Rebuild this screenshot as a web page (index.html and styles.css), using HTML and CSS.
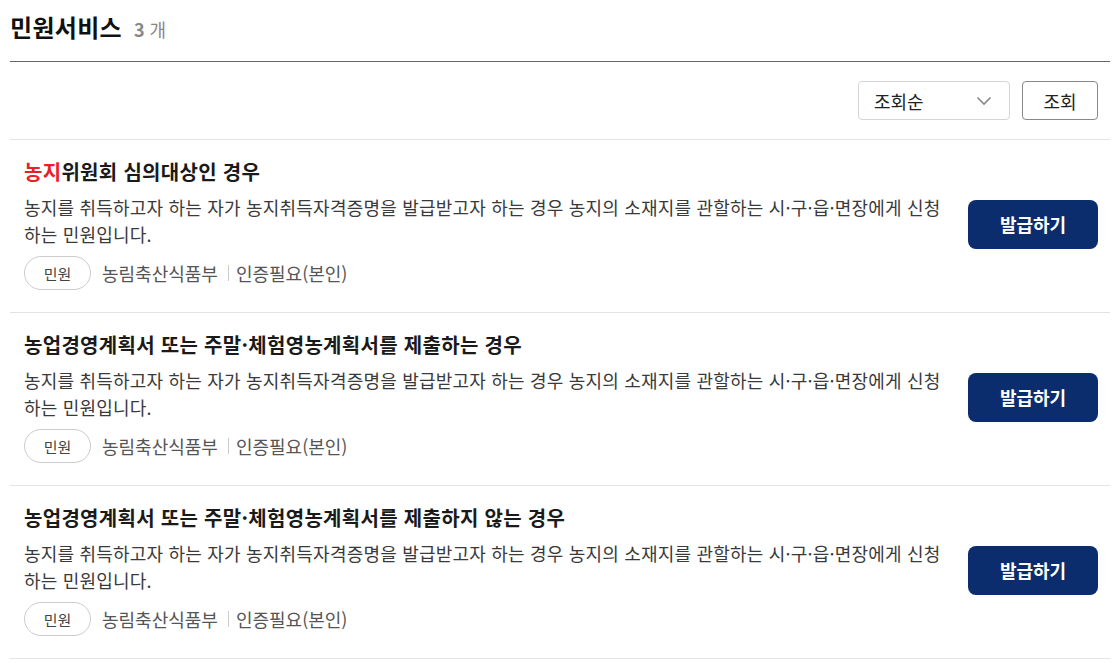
FILE: index.html
```html
<!DOCTYPE html>
<html lang="ko">
<head>
<meta charset="utf-8">
<link rel="stylesheet" href="styles.css">
</head>
<body>
<div class="page">
  <div class="head">
    <h2 class="title">민원서비스</h2>
    <span class="count"><b>3</b> 개</span>
  </div>
  <div class="sortbar">
    <div class="select">
      <span>조회순</span>
      <svg width="16" height="10" viewBox="0 0 16 10"><path d="M1.5 1.5 L8 8 L14.5 1.5" fill="none" stroke="#888" stroke-width="1.6"/></svg>
    </div>
    <button class="btn-search">조회</button>
  </div>
  <ul class="list">
    <li class="item">
      <div class="info">
        <h3 class="item-title"><span class="hl">농지</span>위원회 심의대상인 경우</h3>
        <p class="desc">농지를 취득하고자 하는 자가 농지취득자격증명을 발급받고자 하는 경우 농지의 소재지를 관할하는 시·구·읍·면장에게 신청하는 민원입니다.</p>
        <div class="meta"><span class="pill">민원</span><span class="org">농림축산식품부</span><span class="sep"></span><span class="org">인증필요(본인)</span></div>
      </div>
      <button class="btn-issue">발급하기</button>
    </li>
    <li class="item">
      <div class="info">
        <h3 class="item-title">농업경영계획서 또는 주말·체험영농계획서를 제출하는 경우</h3>
        <p class="desc">농지를 취득하고자 하는 자가 농지취득자격증명을 발급받고자 하는 경우 농지의 소재지를 관할하는 시·구·읍·면장에게 신청하는 민원입니다.</p>
        <div class="meta"><span class="pill">민원</span><span class="org">농림축산식품부</span><span class="sep"></span><span class="org">인증필요(본인)</span></div>
      </div>
      <button class="btn-issue">발급하기</button>
    </li>
    <li class="item">
      <div class="info">
        <h3 class="item-title">농업경영계획서 또는 주말·체험영농계획서를 제출하지 않는 경우</h3>
        <p class="desc">농지를 취득하고자 하는 자가 농지취득자격증명을 발급받고자 하는 경우 농지의 소재지를 관할하는 시·구·읍·면장에게 신청하는 민원입니다.</p>
        <div class="meta"><span class="pill">민원</span><span class="org">농림축산식품부</span><span class="sep"></span><span class="org">인증필요(본인)</span></div>
      </div>
      <button class="btn-issue">발급하기</button>
    </li>
  </ul>
</div>
</body>
</html>
```
FILE: styles.css
```css
* { box-sizing: border-box; }
html, body { margin: 0; padding: 0; background: #fff; }
body {
  font-family: "Noto Sans CJK KR", "Noto Sans", sans-serif;
  color: #1d1d1d;
}
.page { padding: 0 10px; }
.head {
  display: flex;
  align-items: baseline;
  gap: 12px;
  padding: 11px 0 18px;
  border-bottom: 1px solid #666;
}
.title {
  margin: 0;
  font-size: 24px;
  line-height: 32px;
  font-weight: 700;
  color: #111;
  letter-spacing: 0.3px;
}
.count {
  font-size: 18px;
  color: #888;
}
.count b { font-weight: 700; }
.sortbar {
  display: flex;
  justify-content: flex-end;
  gap: 12px;
  padding: 19px 12px 19px 0;
  border-bottom: 1px solid #e3e3e3;
}
.select {
  width: 152px;
  height: 39px;
  border: 1px solid #d5d5d5;
  border-radius: 4px;
  display: flex;
  align-items: center;
  justify-content: space-between;
  padding: 0 17px 0 15px;
  font-size: 18px;
  color: #222;
}
.btn-search {
  width: 76px;
  height: 39px;
  border: 1px solid #888;
  border-radius: 4px;
  background: #fff;
  font-family: inherit;
  font-size: 18px;
  color: #222;
  padding: 0;
}
.list { list-style: none; margin: 0; padding: 0; }
.item {
  display: flex;
  align-items: center;
  justify-content: space-between;
  padding: 18px 12px 22px 14px;
  border-bottom: 1px solid #e3e3e3;
}
.info { width: 920px; }
.item-title {
  margin: 0;
  font-size: 20px;
  line-height: 28px;
  font-weight: 700;
  color: #1a1a1a;
  letter-spacing: 0.3px;
}
.hl { color: #e8202a; }
.desc {
  margin: 8px 0 0;
  font-size: 18px;
  line-height: 27px;
  color: #3a3a3a;
  letter-spacing: 0.2px;
}
.meta {
  display: flex;
  align-items: center;
  margin-top: 8px;
}
.pill {
  width: 67px;
  height: 34px;
  border: 1px solid #ccc;
  border-radius: 17px;
  display: flex;
  align-items: center;
  justify-content: center;
  font-size: 15px;
  color: #444;
  margin-right: 11px;
}
.org {
  font-size: 18px;
  color: #555;
}
.sep {
  width: 1px;
  height: 16px;
  background: #ccc;
  margin: 0 7px 0 10px;
}
.btn-issue {
  width: 130px;
  height: 49px;
  border: 0;
  border-radius: 8px;
  background: #0b2d6d;
  color: #fff;
  font-family: inherit;
  font-size: 18px;
  font-weight: 700;
  padding: 0;
  flex: none;
}
```
